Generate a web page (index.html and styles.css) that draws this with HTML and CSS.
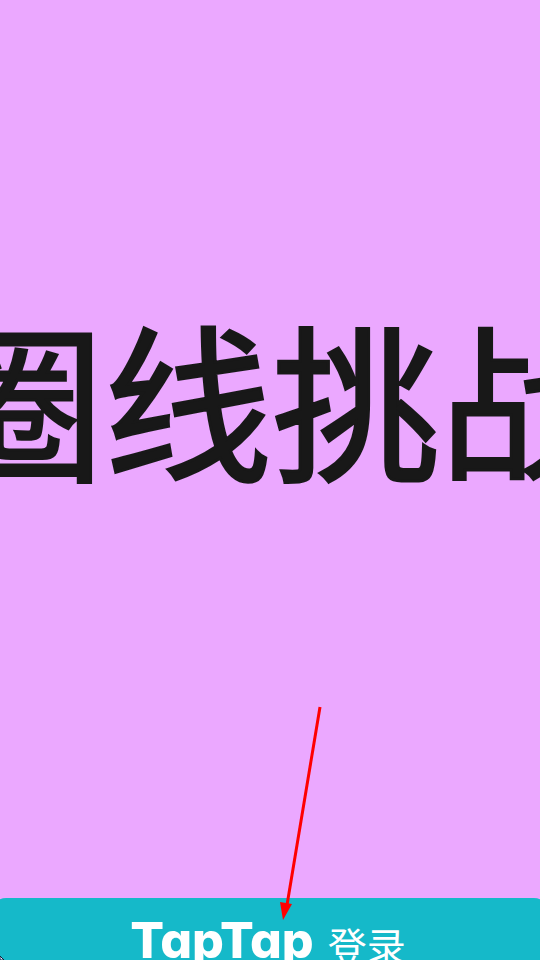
FILE: index.html
```html
<!DOCTYPE html>
<html lang="zh-CN">
<head>
    <meta charset="UTF-8">
    <meta name="viewport" content="width=device-width, initial-scale=1.0">
    <title>圈线挑战</title>
    <link rel="stylesheet" href="styles.css">
</head>
<body>
<main class="start-screen">
    <h1 class="game-title">圈线挑战</h1>
    <button class="login-button" type="button">
        <span class="login-brand">TapTap</span>
        <span class="login-text">登录</span>
    </button>
    <!-- arrow pointing at the login button -->
    <svg class="arrow" width="50" height="220" viewBox="0 0 50 220" aria-hidden="true">
        <path d="M45 7 L12 205" fill="none" stroke="#ff0000" stroke-width="3"/>
        <path d="M5 202 L17 204 L8 220 Z" fill="#ff0000"/>
    </svg>
    <svg class="corner-mark" width="5" height="5" viewBox="0 0 5 5" aria-hidden="true">
        <path d="M0 1 L4 5 H0 Z" fill="#dfe9ff" stroke="#10203a" stroke-width="1"/>
    </svg>
</main>
</body>
</html>
```
FILE: styles.css
```css
* {
    box-sizing: border-box;
}
body {
    margin: 0;
    background-color: #eba8ff;
    font-family: "Noto Sans CJK SC", sans-serif;
}
.start-screen {
    position: relative;
    display: flex;
    flex-direction: column;
    height: 100vh;
    overflow: hidden;
}
.game-title {
    display: flex;
    flex: 1;
    align-items: center;
    justify-content: center;
    margin: 0;
    padding: 0 0 106px 4px;
    color: #181818;
    font-size: 168px;
    font-weight: 400;
    line-height: 200px;
    white-space: nowrap;
    -webkit-text-stroke: 3px #181818;
}
.login-button {
    display: flex;
    flex: none;
    align-items: flex-start;
    justify-content: center;
    gap: 14px;
    height: 96px;
    margin: 0 -8px -34px;
    padding: 14px 4px 0 0;
    border: 0;
    border-radius: 14px;
    background-color: #15b9c9;
    color: #fff;
    cursor: pointer;
}
.login-brand {
    font-family: Inter, "Open Sans", sans-serif;
    font-size: 50px;
    font-weight: 800;
    line-height: 56px;
    font-feature-settings: "cv11";
}
.login-text {
    font-family: "Noto Sans CJK SC", sans-serif;
    font-size: 39px;
    line-height: 64px;
}
.arrow {
    position: absolute;
    bottom: 40px;
    left: calc(50% + 5px);
}
.corner-mark {
    position: absolute;
    bottom: 0;
    left: 0;
}
```
